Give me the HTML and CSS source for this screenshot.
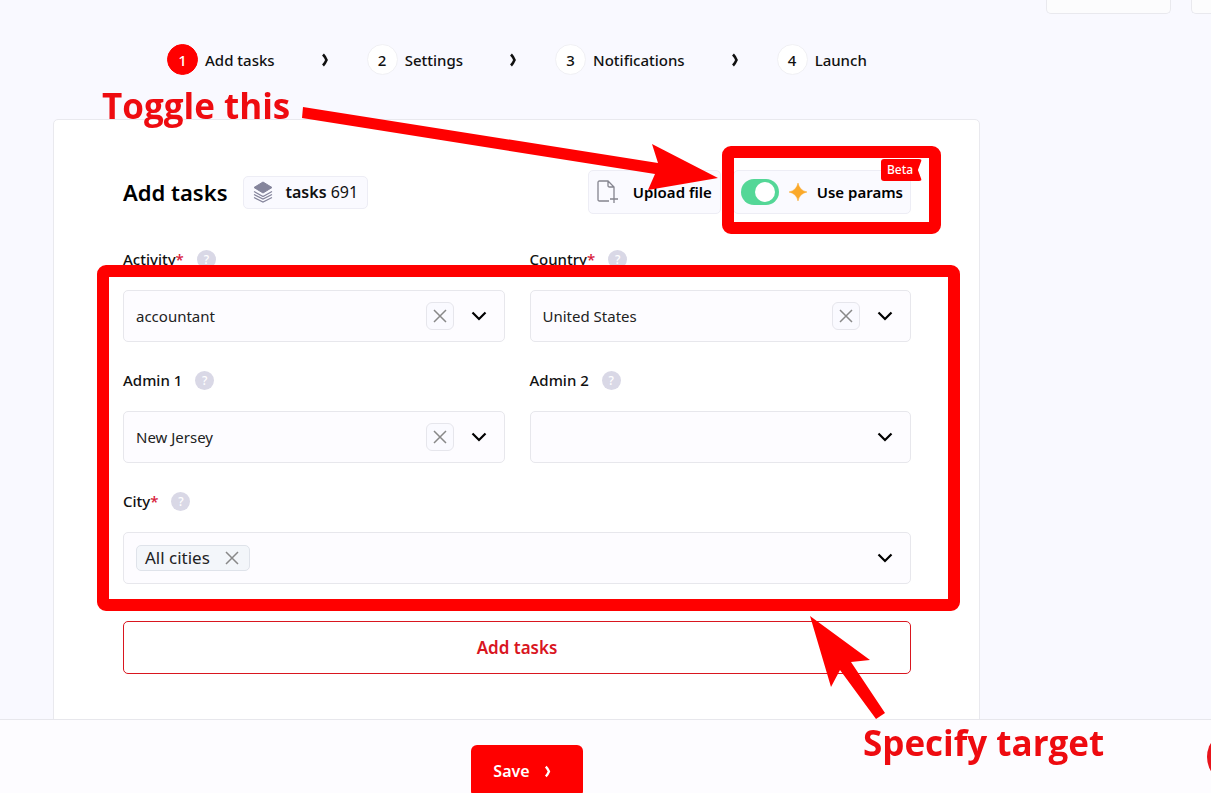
FILE: index.html
```html
<!DOCTYPE html>
<html lang="en">
<head>
<meta charset="utf-8">
<title>Add tasks</title>
<link rel="stylesheet" href="styles.css">
</head>
<body>
<svg class="defs" aria-hidden="true">
  <symbol id="next" viewBox="0 0 10 14"><path d="M2 1.5Q4 3.500 5.500 7Q4 10.500 2 12.5" fill="none" stroke="currentColor" stroke-width="2.6"/></symbol>
  <symbol id="down" viewBox="0 0 16 10"><path d="M1.5 1.5L8 8L14.500 1.500" fill="none" stroke="currentColor" stroke-width="2.200"/></symbol>
  <symbol id="cross" viewBox="0 0 14 14"><path d="M1 1L13 13M13 1L1 13" fill="none" stroke="currentColor" stroke-width="1.500"/></symbol>
</svg>
<div class="app">
  <header class="topbar">
    <button class="top-button top-button-wide" aria-label="Account"></button>
    <button class="top-button" aria-label="Menu"></button>
  </header>
  <main class="main">
    <ol class="steps">
      <li class="step"><span class="step-number step-current">1</span>Add tasks</li>
      <li class="step-next" aria-hidden="true"><svg><use href="#next"/></svg></li>
      <li class="step"><span class="step-number">2</span>Settings</li>
      <li class="step-next" aria-hidden="true"><svg><use href="#next"/></svg></li>
      <li class="step"><span class="step-number">3</span>Notifications</li>
      <li class="step-next" aria-hidden="true"><svg><use href="#next"/></svg></li>
      <li class="step"><span class="step-number">4</span>Launch</li>
    </ol>
    <section class="card">
      <div class="card-head">
        <h1 class="title">Add tasks</h1>
        <div class="count">
          <svg class="layers" viewBox="0 0 20 22"><path d="M10 1L19 6.500L10 12L1 6.500Z" fill="#85859c" stroke="#85859c" stroke-linejoin="round"/><path d="M1 10.500L10 15.500L19 10.500M1 13.500L10 18L19 13.500M1 16.500L10 21L19 16.500" fill="none" stroke="#85859c" stroke-width="1.200"/></svg>
          <span><b>tasks</b> 691</span>
        </div>
        <button class="tool upload">
          <svg class="file" viewBox="0 0 22 24"><path d="M12 21H2.500Q1 21 1 19.500V2.500Q1 1 2.500 1H11L17 7V15M11 1V5.500Q11 7 12.500 7H17M17 15V23M13 19H21" fill="none" stroke="#85858f" stroke-width="1.300"/></svg>
          Upload file
        </button>
        <label class="tool params">
          <input class="toggle" type="checkbox" role="switch" checked>
          <svg class="spark" viewBox="0 0 18 18"><path d="M9 0Q10.500 7.500 18 9Q10.500 10.500 9 18Q7.500 10.500 0 9Q7.500 7.500 9 0Z" fill="#fba92a" stroke="#fba92a" stroke-width=".5"/></svg>
          Use params
          <span class="beta">Beta</span>
        </label>
      </div>
      <form class="form">
        <div class="field">
          <div class="label-row"><label for="activity">Activity<i>*</i></label><button type="button" class="help">?</button></div>
          <div class="box"><select id="activity"><option>accountant</option></select><button type="button" class="clear" aria-label="Clear activity"><svg><use href="#cross"/></svg></button><svg class="down"><use href="#down"/></svg></div>
        </div>
        <div class="field">
          <div class="label-row"><label for="country">Country<i>*</i></label><button type="button" class="help">?</button></div>
          <div class="box"><select id="country"><option>United States</option></select><button type="button" class="clear" aria-label="Clear country"><svg><use href="#cross"/></svg></button><svg class="down"><use href="#down"/></svg></div>
        </div>
        <div class="field">
          <div class="label-row"><label for="admin1">Admin 1</label><button type="button" class="help">?</button></div>
          <div class="box"><select id="admin1"><option>New Jersey</option></select><button type="button" class="clear" aria-label="Clear admin 1"><svg><use href="#cross"/></svg></button><svg class="down"><use href="#down"/></svg></div>
        </div>
        <div class="field">
          <div class="label-row"><label for="admin2">Admin 2</label><button type="button" class="help">?</button></div>
          <div class="box"><select id="admin2"><option></option></select><svg class="down"><use href="#down"/></svg></div>
        </div>
        <div class="field field-wide">
          <div class="label-row"><label for="city">City<i>*</i></label><button type="button" class="help">?</button></div>
          <div class="box box-chips"><span class="chip">All cities<button type="button" class="chip-clear" aria-label="Remove All cities"><svg><use href="#cross"/></svg></button></span><select id="city"><option></option></select><svg class="down"><use href="#down"/></svg></div>
        </div>
        <button type="button" class="add">Add tasks</button>
      </form>
    </section>
  </main>
  <footer class="footer">
    <div class="footer-inner"><button class="save">Save <svg><use href="#next"/></svg></button></div>
  </footer>
  <button class="chat" aria-label="Chat"></button>
</div>
<div class="notes">
  <svg class="note-shapes" aria-hidden="true">
    <rect x="103" y="271" width="851" height="334" rx="3"/>
    <rect x="728" y="152" width="207" height="76" rx="3"/>
    <path d="M303 107L658 163L652 144L718 178L648 190L655 174L302 118Z"/>
    <path d="M810 616L870 660L851 662L885 713L876 719L840 670L831 687Z"/>
  </svg>
  <p class="note note-toggle">Toggle this</p>
  <p class="note note-target">Specify target</p>
</div>
</body>
</html>
```
FILE: styles.css
```css
* { box-sizing: border-box; }
body {
  margin: 0;
  background: #f9f9ff;
  color: #111;
  font: 500 15px/20px "Noto Sans", "Open Sans", sans-serif;
}
button, select { font: inherit; color: inherit; }
button { cursor: pointer; }
.defs { display: none; }
.app {
  height: 100vh;
  display: flex;
  flex-direction: column;
  overflow: hidden;
}
.topbar {
  flex: none;
  height: 44px;
  display: flex;
  justify-content: flex-end;
  align-items: flex-start;
  gap: 20px;
}
.top-button {
  width: 20px;
  height: 14px;
  padding: 0;
  border: 1px solid #e9e9ee;
  border-top: 0;
  border-right: 0;
  border-radius: 0 0 0 5px;
  background: #fcfcfd;
}
.top-button-wide {
  width: 125px;
  border-right: 1px solid #e9e9ee;
  border-radius: 0 0 5px 5px;
}
.main { flex: 1; min-height: 0; overflow: hidden; }
.steps {
  display: flex;
  align-items: center;
  margin: 0;
  padding: 0 0 0 167px;
  list-style: none;
}
.step { display: flex; align-items: center; gap: 7px; }
.step-number {
  width: 31px;
  height: 31px;
  display: grid;
  place-items: center;
  border: 1px solid #f0f0f4;
  border-radius: 50%;
  background: #fff;
}
.step-current { background: #f00; border-color: #f00; color: #fff; }
.step-next { margin: 0 36px 0 46px; display: flex; }
.step-next svg { width: 10px; height: 14px; }
.card {
  margin: 44px 231px 0 53px;
  padding: 50px 68px 50px 69px;
  min-height: 700px;
  border: 1px solid #e9e9ee;
  border-radius: 5px;
  background: #fff;
}
.card-head { display: flex; align-items: center; height: 44px; }
.title { margin: 0 16px 0 0; font-size: 22px; line-height: 30px; font-weight: 600; color: #000; }
.count {
  display: flex;
  align-items: center;
  gap: 12px;
  height: 33px;
  padding: 0 9px;
  border: 1px solid #ededf5;
  border-radius: 5px;
  background: #fafaff;
  font-size: 16px;
  font-weight: 400;
}
.count b { font-weight: 600; }
.layers { width: 20px; height: 22px; }
.tool {
  position: relative;
  display: flex;
  align-items: center;
  height: 44px;
  border: 1px solid #ededf5;
  border-radius: 5px;
  background: #fafaff;
  color: #000;
  font-weight: 600;
}
.upload { margin-left: auto; padding: 0 8px; gap: 14px; }
.file { width: 22px; height: 24px; }
.params { margin-left: 12px; padding: 0 7px; gap: 10px; }
.toggle {
  appearance: none;
  width: 38px;
  height: 26px;
  margin: 0;
  padding: 3px 4px;
  display: flex;
  justify-content: flex-end;
  border-radius: 13px;
  background: #54d797;
}
.toggle::before { content: ""; width: 20px; height: 20px; border-radius: 50%; background: #fff; }
.spark { width: 18px; height: 18px; }
.beta {
  position: absolute;
  top: -12px;
  right: -12px;
  width: 41px;
  height: 22px;
  padding-left: 6px;
  border-radius: 3px;
  background: #f00;
  color: #fff;
  font-size: 12px;
  line-height: 22px;
  font-weight: 500;
  clip-path: polygon(0 0, 100% 0, 90% 50%, 100% 100%, 0 100%);
}
.form {
  margin-top: 35px;
  display: grid;
  grid-template-columns: 1fr 1fr;
  gap: 28px 25px;
}
.field-wide, .add { grid-column: 1 / -1; }
.label-row { display: flex; align-items: center; gap: 13px; height: 20px; margin-bottom: 21px; }
.label-row i { color: #d8203a; font-style: normal; }
.help {
  width: 19px;
  height: 19px;
  padding: 0;
  border: 0;
  border-radius: 50%;
  background: #d9d8e6;
  color: #fff;
  font-size: 12px;
  line-height: 19px;
}
.box {
  display: flex;
  align-items: center;
  height: 52px;
  padding: 0 17px 0 12px;
  border: 1px solid #e7e7ec;
  border-radius: 5px;
  background: #fdfcff;
}
.box select {
  appearance: none;
  flex: 1;
  min-width: 0;
  height: 100%;
  padding: 0;
  border: 0;
  background: transparent;
  font-weight: 400;
  color: #222;
}
.clear {
  width: 28px;
  height: 28px;
  margin-right: 17px;
  padding: 0;
  display: grid;
  place-items: center;
  border: 1px solid #e6e6ec;
  border-radius: 6px;
  background: #fafaff;
  color: #888;
}
.clear svg { width: 14px; height: 14px; }
.down { width: 16px; height: 10px; color: #000; pointer-events: none; }
.chip {
  display: flex;
  align-items: center;
  gap: 15px;
  height: 26px;
  padding: 0 10px 0 8px;
  border: 1px solid #dfe3ea;
  border-radius: 5px;
  background: #f3f6fa;
  color: #222;
  font-size: 17px;
  font-weight: 400;
}
.chip-clear { display: flex; padding: 0; border: 0; background: none; color: #888; }
.chip-clear svg { width: 14px; height: 14px; }
.add {
  height: 53px;
  margin-top: 9px;
  border: 1px solid #d9161f;
  border-radius: 5px;
  background: #fff;
  color: #d9161f;
  font-size: 17px;
  font-weight: 600;
}
.footer {
  flex: none;
  height: 74px;
  padding-top: 25px;
  border-top: 1px solid #e7e7ec;
  background: #fdfcff;
  overflow: hidden;
}
.footer-inner { margin-right: 157px; display: flex; justify-content: center; }
.save {
  display: flex;
  align-items: center;
  gap: 14px;
  height: 52px;
  padding: 0 30px 0 22px;
  border: 0;
  border-radius: 6px;
  background: #f00;
  color: #fff;
  font-size: 16px;
  font-weight: 600;
}
.save svg { width: 9px; height: 13px; }
.chat {
  position: fixed;
  right: -52px;
  bottom: 8px;
  width: 56px;
  height: 56px;
  border: 0;
  border-radius: 50%;
  background: #e8141c;
}
.notes { position: absolute; inset: 0; overflow: hidden; pointer-events: none; }
.note-shapes { display: block; width: 100%; height: 100%; }
.note-shapes rect { fill: none; stroke: #f00; stroke-width: 12px; stroke-linejoin: round; }
.note-shapes path { fill: #f00; }
.note {
  position: absolute;
  margin: 0;
  color: #ee0b10;
  font: 700 35px/48px "Open Sans", "Noto Sans", sans-serif;
  white-space: nowrap;
}
.note-toggle { left: 102px; top: 82px; }
.note-target { left: 863px; top: 719px; }
```
